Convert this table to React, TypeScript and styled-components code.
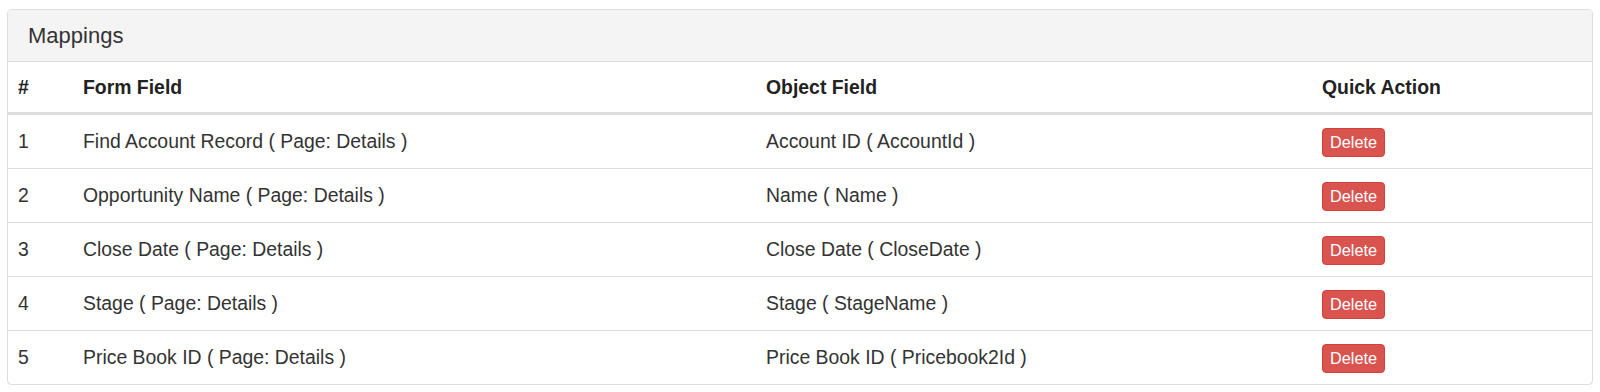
import styled, { createGlobalStyle } from 'styled-components';

const GlobalStyle = createGlobalStyle`
  body {
    margin: 0;
    background: #fff;
    font-family: "Liberation Sans", Arial, sans-serif;
    color: #333;
  }
`;

const Page = styled.div`
  padding: 9px 7px 0 7px;
`;

const Panel = styled.div`
  border: 1px solid #ddd;
  border-radius: 5px;
  background: #fff;
  box-shadow: 0 1px 1px rgba(0, 0, 0, 0.05);
  overflow: hidden;
`;

const PanelHeading = styled.div`
  height: 51px;
  display: flex;
  align-items: center;
  padding: 0 20px;
  background: #f4f4f4;
  border-bottom: 1px solid #ddd;
  font-size: 22px;
  color: #333;
`;

const Table = styled.table`
  width: 100%;
  border-collapse: collapse;
  table-layout: fixed;
  font-size: 19.4px;
`;

// widths are content widths; each cell adds 20px of padding
const HeadCell = styled.th<{ $width?: number }>`
  width: ${(p) => (p.$width ? `${p.$width}px` : 'auto')};
  height: 50px;
  padding: 0 10px;
  text-align: left;
  vertical-align: middle;
  font-weight: bold;
  color: #222;
  border-bottom: 3px solid #ddd;
`;

const Row = styled.tr`
  & + & td {
    border-top: 1px solid #ddd;
  }
`;

const Cell = styled.td`
  height: 53px;
  padding: 0 10px;
  vertical-align: middle;
  color: #333;
`;

const DeleteButton = styled.button`
  display: inline-block;
  margin: 1px 0 0 0;
  height: 29px;
  padding: 0 7px;
  border: 1px solid #d43f3a;
  border-radius: 4px;
  background: #d9534f;
  color: #fff;
  font-family: "Liberation Sans", Arial, sans-serif;
  font-size: 16.3px;
  line-height: 27px;
  cursor: pointer;
`;

const mappings = [
  { form: 'Find Account Record ( Page: Details )', object: 'Account ID ( AccountId )' },
  { form: 'Opportunity Name ( Page: Details )', object: 'Name ( Name )' },
  { form: 'Close Date ( Page: Details )', object: 'Close Date ( CloseDate )' },
  { form: 'Stage ( Page: Details )', object: 'Stage ( StageName )' },
  { form: 'Price Book ID ( Page: Details )', object: 'Price Book ID ( Pricebook2Id )' },
];

const App = () => (
  <>
    <GlobalStyle />
    <Page>
      <Panel>
        <PanelHeading>Mappings</PanelHeading>
        <Table>
          <thead>
            <tr>
              <HeadCell $width={45}>#</HeadCell>
              <HeadCell $width={663}>Form Field</HeadCell>
              <HeadCell $width={536}>Object Field</HeadCell>
              <HeadCell>Quick Action</HeadCell>
            </tr>
          </thead>
          <tbody>
            {mappings.map((m, i) => (
              <Row key={m.form}>
                <Cell>{i + 1}</Cell>
                <Cell>{m.form}</Cell>
                <Cell>{m.object}</Cell>
                <Cell>
                  <DeleteButton type="button">Delete</DeleteButton>
                </Cell>
              </Row>
            ))}
          </tbody>
        </Table>
      </Panel>
    </Page>
  </>
);

export default App;
